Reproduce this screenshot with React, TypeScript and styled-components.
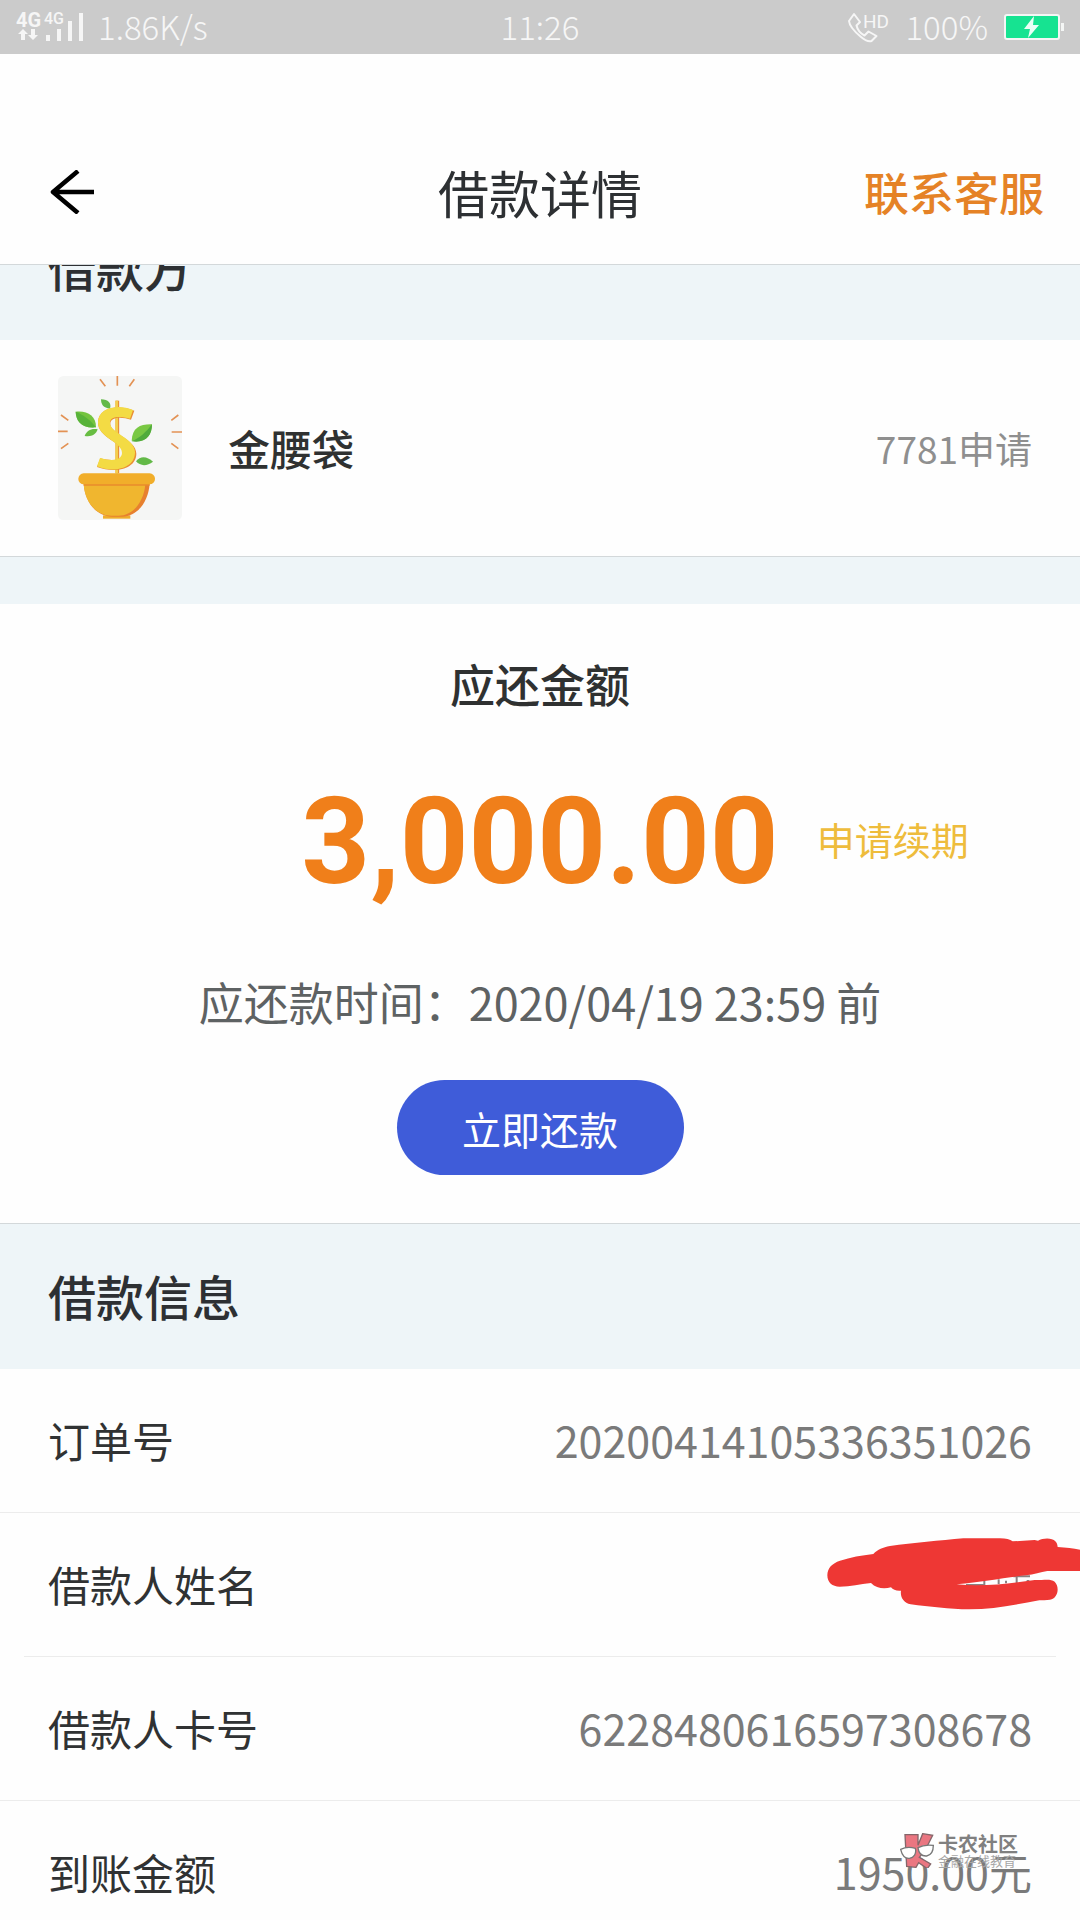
import React, { useLayoutEffect, useRef } from "react";
import styled, { createGlobalStyle } from "styled-components";

const cjk = `"Noto Sans CJK SC", "Noto Sans", sans-serif`;

const GlobalStyle = createGlobalStyle`
  * { box-sizing: border-box; }
  body { margin: 0; background: #fefefe; font-family: ${cjk}; color: #2d3033; }
  h1, h2, p, dl, dt, dd { margin: 0; font-weight: 400; }
  button { border: 0; background: none; padding: 0; font-family: inherit; cursor: pointer; }
  a { text-decoration: none; }
`;

const Screen = styled.div`
  height: 100vh;
  display: flex;
  flex-direction: column;
  overflow: hidden;
  position: relative;
`;

const StatusBar = styled.div`
  flex: none;
  height: 54px;
  padding: 0 16px;
  display: grid;
  grid-template-columns: 1fr auto 1fr;
  align-items: center;
  background: #cbcbcb;
  color: #f6f6f6;
  font-size: 33px;
  font-weight: 300;
  line-height: 52px;
  svg { display: block; }
`;

const StatusText = styled.span`
  height: 54px;
`;

const StatusGroup = styled.div<{ $gap: number; $end?: boolean }>`
  display: flex;
  align-items: center;
  gap: ${(p) => p.$gap}px;
  justify-content: ${(p) => (p.$end ? "flex-end" : "flex-start")};
`;

const Header = styled.header`
  flex: none;
  padding: 70px 36px 0;
  border-bottom: 1px solid #d3d8da;
`;

const HeaderBar = styled.div`
  height: 140px;
  padding-bottom: 4px;
  display: grid;
  grid-template-columns: 1fr auto 1fr;
  align-items: center;
`;

const BackButton = styled.button`
  justify-self: start;
  padding-left: 12px;
  svg { display: block; }
`;

const Title = styled.h1`
  font-size: 51px;
  line-height: 60px;
`;

const ServiceLink = styled.a`
  justify-self: end;
  color: #e58226;
  font-size: 45px;
  font-weight: 500;
  line-height: 60px;
`;

const Content = styled.main`
  flex: 1;
  min-height: 0;
  overflow-y: auto;
  scrollbar-width: none;
`;

const SectionHeading = styled.h2`
  height: 145px;
  padding: 0 48px 4px;
  display: flex;
  align-items: center;
  background: #eef5f8;
  font-size: 48px;
  font-weight: 500;
`;

const Lender = styled.section`
  height: 217px;
  padding: 0 48px 0 58px;
  display: flex;
  align-items: center;
  border-bottom: 1px solid #d3d8da;
  svg { display: block; }
`;

const LenderName = styled.strong`
  flex: 1;
  padding: 0 0 2px 46px;
  font-size: 42px;
  font-weight: 500;
  color: #2f3131;
`;

const LenderCount = styled.span`
  font-size: 37px;
  color: #8f8f8f;
`;

const Spacer = styled.div`
  height: 47px;
  background: #eef5f8;
`;

const Due = styled.section`
  padding: 50px 0 48px;
  display: flex;
  flex-direction: column;
  align-items: center;
  border-bottom: 1px solid #d3d8da;
`;

const DueTitle = styled.h2`
  font-size: 45px;
  font-weight: 500;
  line-height: 60px;
  color: #2f3131;
`;

const DueLine = styled.div`
  align-self: stretch;
  margin: 58px 0 60px;
  display: grid;
  grid-template-columns: 1fr auto 1fr;
  align-items: center;
`;

const DueAmount = styled.strong`
  grid-column: 2;
  font-family: Roboto, sans-serif;
  font-size: 120px;
  font-weight: 700;
  line-height: 140px;
  color: #f07f1a;
`;

const ExtendButton = styled.button`
  justify-self: start;
  margin-left: 38px;
  padding-bottom: 6px;
  font-size: 38px;
  line-height: 60px;
  color: #eebc3c;
`;

const DueTime = styled.p`
  font-size: 45px;
  line-height: 60px;
  color: #5e6263;
`;

const PayButton = styled.button`
  width: 287px;
  height: 95px;
  margin-top: 48px;
  border-radius: 48px;
  background: #3f5cd9;
  color: #fff;
  font-size: 39px;
`;

const InfoList = styled.dl``;

const InfoRow = styled.div<{ $inset?: boolean }>`
  height: 144px;
  margin: 0 ${(p) => (p.$inset ? 24 : 0)}px;
  padding: 0 ${(p) => (p.$inset ? 24 : 48)}px 3px;
  display: flex;
  align-items: center;
  justify-content: space-between;
  position: relative;
  border-bottom: 1px solid #ececec;
`;

const InfoLabel = styled.dt`
  font-size: 42px;
  color: #303233;
`;

const InfoValue = styled.dd`
  font-size: 43px;
  color: #7a7a7a;
`;

const Scribble = styled.svg`
  position: absolute;
  top: 0;
  right: -24px;
`;

const Watermark = styled.div`
  position: absolute;
  right: 62px;
  bottom: 52px;
  display: flex;
  align-items: center;
  gap: 4px;
  color: #808080;
`;

const WatermarkText = styled.div`
  display: flex;
  flex-direction: column;
`;

const WatermarkName = styled.span`
  font-size: 20px;
  font-weight: 700;
  line-height: 21px;
`;

const WatermarkSlogan = styled.span`
  font-size: 13px;
  line-height: 14px;
  color: #a6a6a6;
`;

const SignalIcon = () => (
  <svg width="68" height="54" viewBox="15 0 68 54" fill="#f6f6f6" aria-hidden="true">
    <text x="15" y="27" fontFamily="Roboto, sans-serif" fontSize="20" fontWeight="700">4G</text>
    <text x="43" y="24" fontFamily="Roboto, sans-serif" fontSize="16" fontWeight="500">4G</text>
    <path d="M22 29l5 5h-3v6h-4v-6h-3zM32 40l5-5h-3v-6h-4v6h-3z" />
    <path d="M45 35h4v6h-4zM56 29h4v12h-4zM67 21h4v20h-4zM78 13h4v28h-4z" />
  </svg>
);

const CallIcon = () => (
  <svg width="42" height="54" viewBox="846 0 42 54" aria-hidden="true">
    <path
      d="M853 14l6 8-3.500 3.500c1 4.500 4 8 8 10l4-4 8 4.500-5 5c-3 1-7-1-11-4.500-6-5-11-10-11.500-15.500z"
      fill="none" stroke="#f6f6f6" strokeWidth="2" strokeLinejoin="round"
    />
    <text x="862" y="28" fontFamily="Roboto, sans-serif" fontSize="19" fontWeight="400" fill="#f6f6f6">HD</text>
  </svg>
);

const BatteryIcon = () => (
  <svg width="60" height="54" viewBox="1004 0 60 54" aria-hidden="true">
    <rect x="1005" y="15" width="54" height="24" rx="2" fill="#16e391" stroke="#f4f6f5" strokeWidth="2" />
    <path d="M1061 23h3v8h-3z" fill="#f4f6f5" />
    <path d="M1034 16l-10 13h6l-2 9 11-13h-6z" fill="#eafff6" />
  </svg>
);

const ArrowIcon = () => (
  <svg width="48" height="44" viewBox="0 0 48 44" fill="none" stroke="#000" strokeWidth="4.500" aria-hidden="true">
    <path d="M46 22H6M30 1L5 22l25 21" strokeLinejoin="round" />
  </svg>
);

const PlantLogo = () => (
  <svg width="124" height="144" viewBox="84 78 372 432" role="img" aria-label="金腰袋">
    <rect x="84" y="78" width="372" height="432" rx="16" fill="#f5f6f5" />
    <path
      d="M262 78v29M210 88l16 21M313 88l-15 21M93 195l22 16M84 244h29M93 296l22-16M445 195l-21 16M456 246h-31M445 296l-21-16"
      stroke="#e39254" strokeWidth="5" fill="none"
    />
    <path d="M198 232c-44 4-60-20-61-47 34-4 62 12 61 47z" fill="#73c43f" />
    <path d="M137 185c20 8 44 24 61 47-44 4-60-20-61-47z" fill="#58b33a" />
    <path d="M213 148c22 0 32 12 27 28-20-2-27-12-27-28z" fill="#62b947" />
    <path d="M164 258c6-18 22-24 39-20-6 18-20 23-39 20z" fill="#67bd42" />
    <path d="M305 272c2-40 26-50 61-49 0 34-20 58-61 49z" fill="#79c843" />
    <path d="M305 274c24-10 44-28 61-51 0 34-20 58-61 51z" fill="#50ab3c" />
    <path d="M318 334c14-18 34-14 51 1-18 14-38 14-51-1z" fill="#62b947" />
    <path d="M262 152v218" stroke="#e88e36" strokeWidth="11" />
    <path d="M260 152v218" stroke="#f3cf4d" strokeWidth="8" />
    <path
      d="M313 182l-10 27c-26-8-58-10-62 10-4 32 78 48 78 92 0 46-64 60-118 40l10-26c34 9 68 6 70-14 0-34-78-46-77-94 1-46 62-54 109-35z"
      fill="#e98f35"
    />
    <path
      d="M309 180l-9 26c-28-8-60-9-60 12 0 32 75 46 75 89 0 48-62 64-114 42l9-25c36 11 65 7 66-15 0-34-73-46-72-92 1-46 62-55 105-37z"
      fill="#f3db44"
    />
    <path d="M219 496h82v10h-82z" fill="#efad2c" />
    <path d="M161 398h198c-2 54-36 102-82 102h-30c-50 0-84-48-86-102z" fill="#e7802f" />
    <path d="M161 402h185c-4 52-36 95-80 95h-22c-48 0-81-45-83-95z" fill="#f0b62f" />
    <path d="M161 400h198v7H161z" fill="#e98b2c" />
    <rect x="145" y="370" width="230" height="33" rx="16" fill="#f1ae2a" />
  </svg>
);

const rows = [
  { label: "订单号", value: "20200414105336351026" },
  { label: "借款人姓名", value: null },
  { label: "借款人卡号", value: "6228480616597308678" },
  { label: "到账金额", value: "1950.00元" },
];

export default function App() {
  const content = useRef<HTMLElement>(null);

  // The list opens slightly scrolled, with its first heading under the header.
  useLayoutEffect(() => {
    if (content.current) content.current.scrollTop = 70;
  }, []);

  return (
    <Screen>
      <GlobalStyle />
      <StatusBar>
        <StatusGroup $gap={14}>
          <SignalIcon />
          <StatusText>1.86K/s</StatusText>
        </StatusGroup>
        <StatusText>11:26</StatusText>
        <StatusGroup $gap={16} $end>
          <CallIcon />
          <StatusText>100%</StatusText>
          <BatteryIcon />
        </StatusGroup>
      </StatusBar>

      <Header>
        <HeaderBar>
          <BackButton aria-label="返回"><ArrowIcon /></BackButton>
          <Title>借款详情</Title>
          <ServiceLink href="#service">联系客服</ServiceLink>
        </HeaderBar>
      </Header>

      <Content ref={content}>
        <SectionHeading>借款方</SectionHeading>
        <Lender>
          <PlantLogo />
          <LenderName>金腰袋</LenderName>
          <LenderCount>7781申请</LenderCount>
        </Lender>
        <Spacer />

        <Due>
          <DueTitle>应还金额</DueTitle>
          <DueLine>
            <DueAmount>3,000.00</DueAmount>
            <ExtendButton>申请续期</ExtendButton>
          </DueLine>
          <DueTime>应还款时间：2020/04/19 23:59 前</DueTime>
          <PayButton>立即还款</PayButton>
        </Due>

        <SectionHeading>借款信息</SectionHeading>
        <InfoList>
          {rows.map((row) => (
            <InfoRow key={row.label} $inset={row.value === null}>
              <InfoLabel>{row.label}</InfoLabel>
              <InfoValue>
                {row.value ?? (
                  <Scribble width="280" height="128" viewBox="0 9 840 384" aria-hidden="true">
                    <path d="M498 225h56M553 212v14M596 208v14M618 212v8M650 198v22M640 199h50M680 213h8" stroke="#8a8080" strokeWidth="6" />
                    <path
                      d="M82 196c0-22 14-36 38-44 32-10 64-16 100-20 14-14 28-20 50-24 70-10 150-16 220-23h110c18 0 30 3 38 9l66-4 10 2c14-8 42-10 52 2 5 5 6 10 7 17 26 2 46 4 67 8v64H742c-20 4-40 10-64 13-70 8-130 20-208 27 80 8 160-3 234-13 34 0 48-4 60 5 16 16 10 50-14 54-12 2-22 1-32 2-76 14-140 27-210 27-60 0-120-8-176-15-22-4-32-22-29-41-14 1-24-2-30-10-20 6-44 4-60-13-34 4-60 10-94 11-22 0-37-12-37-34z"
                      fill="#ee3734"
                    />
                  </Scribble>
                )}
              </InfoValue>
            </InfoRow>
          ))}
        </InfoList>
      </Content>

      <Watermark>
        <svg width="34" height="35" viewBox="360 158 102 105" aria-hidden="true">
          <path d="M375 163h39v32l14-35 30 5-22 44-18 22 34 20-10 14-26-18-8 14-28-3z" fill="#ea7681" stroke="#85666a" strokeWidth="4" />
          <path d="M362 207c14-7 30-7 44-3 4 16-4 28-18 30-14 1-22-10-26-27zM414 202c14-8 30-9 46-7 0 18-8 30-20 32-14 1-24-8-26-25z" fill="#fff" stroke="#777" strokeWidth="4" />
        </svg>
        <WatermarkText>
          <WatermarkName>卡农社区</WatermarkName>
          <WatermarkSlogan>金融在线教育</WatermarkSlogan>
        </WatermarkText>
      </Watermark>
    </Screen>
  );
}
